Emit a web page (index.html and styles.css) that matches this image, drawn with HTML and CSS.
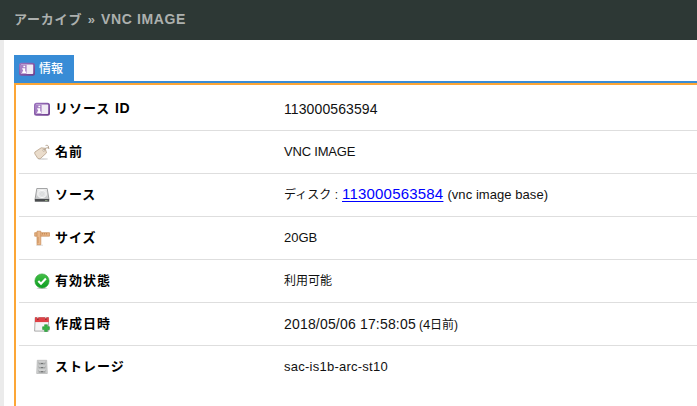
FILE: index.html
```
<!DOCTYPE html>
<html lang="ja">
<head>
<meta charset="utf-8">
<title>アーカイブ » VNC IMAGE</title>
<link rel="stylesheet" href="styles.css">
</head>
<body>
<svg class="defs" aria-hidden="true">
  <defs>
    <linearGradient id="purple" x2="1" y2="1"><stop stop-color="#9a70bd"/><stop offset="1" stop-color="#70408f"/></linearGradient>
    <linearGradient id="silver" x2="0" y2="1"><stop stop-color="#f1f1f1"/><stop offset="1" stop-color="#bfc0c1"/></linearGradient>
    <linearGradient id="green" x2="0" y2="1"><stop stop-color="#45bf47"/><stop offset="1" stop-color="#0b9d20"/></linearGradient>
    <symbol id="info" viewBox="0 0 16 16">
      <rect x=".9" y="2.6" width="14.2" height="11.2" rx="1.6" fill="#f1ebf5" stroke="url(#purple)" stroke-width="1.8"/>
      <rect x="2" y="3.8" width="5.6" height="8.8" fill="#a67fc4"/>
      <path d="M4.4 4.8h1.8v1.5H4.4zM3.2 7.2h3v3.4h1v1.3H3.2v-1.3h.9V8.5h-.9z" fill="#fff"/>
    </symbol>
  </defs>
</svg>
<header class="header"><h1>アーカイブ <span class="raquo">»</span> <span class="title-name">VNC IMAGE</span></h1></header>
<main class="main">
  <nav class="tabs"><div class="tab"><svg class="icon"><use href="#info"/></svg><span>情報</span></div></nav>
  <dl class="panel">
    <div class="row">
      <dt><svg class="icon"><use href="#info"/></svg><span>リソース <span class="id">ID</span></span></dt>
      <dd><span class="number">113000563594</span></dd>
    </div>
    <div class="row">
      <dt><svg class="icon" viewBox="0 0 16 16"><ellipse cx="9" cy="15" rx="5" ry=".9" fill="#ddd"/><path d="M.8 8.1 7.2 3.8l4 .5 1.3 4.6-6.4 5.9-2.3-.4L.8 9.8z" fill="#eadccb" stroke="#bda994" stroke-width=".9"/><circle cx="9.8" cy="6.3" r="1" fill="#fff" stroke="#a89580" stroke-width=".6"/><path d="M10 6.2c1-3.3 4.2-1.4 4.4-3.4.1-1.4-1.5-1.8-2.8-1.2M14.4 3l.5 2" fill="none" stroke="#b29f8a"/></svg><span>名前</span></dt>
      <dd><span class="upper">VNC IMAGE</span></dd>
    </div>
    <div class="row">
      <dt><svg class="icon" viewBox="0 0 16 16"><path d="M2.8 1.5h10.4l1.8 11H1z" fill="url(#silver)" stroke="#8e8f90" stroke-width=".8"/><ellipse cx="8" cy="7" rx="4.2" ry="3.5" fill="#e2e3e4" stroke="#fafafa"/><circle cx="8" cy="7" r="1.1" fill="#fff" stroke="#b9bbbd" stroke-width=".5"/><path d="M.8 12h14.4v2.7H.8z" fill="#4a4c4e"/><path d="M11 13h2.5v.8H11z" fill="#9eb58c"/></svg><span>ソース</span></dt>
      <dd><span class="disk">ディスク<span class="colon">:</span></span><a href="#">113000563584</a><span class="note">(vnc image base)</span></dd>
    </div>
    <div class="row">
      <dt><svg class="icon" viewBox="0 0 16 16"><path d="M2 15.2h7" stroke="#ddd"/><path d="M.7 2.7h14.8v3.5H.7z" fill="#e5b181" stroke="#c98d58" stroke-width=".7"/><path d="M3 1.2h3.8v13.5H3z" fill="#e9b789" stroke="#c88c57" stroke-width=".7"/><path d="M8.5 3v1.5m2-1.5v1.5m2-1.5v1.5M3.3 8H5m-1.7 2H5m-1.7 2H5" stroke="#b7773f" stroke-width=".6"/></svg><span>サイズ</span></dt>
      <dd><span class="size">20GB</span></dd>
    </div>
    <div class="row">
      <dt><svg class="icon" viewBox="0 0 16 16"><ellipse cx="8" cy="15.2" rx="5.5" ry=".8" fill="#ccc"/><circle cx="8" cy="8" r="7.1" fill="url(#green)" stroke="#259d31" stroke-width=".6"/><path d="m4.3 8 2.7 2.7 4.9-5.1" fill="none" stroke="#fff" stroke-width="2.1"/></svg><span>有効状態</span></dt>
      <dd><span>利用可能</span></dd>
    </div>
    <div class="row">
      <dt><svg class="icon" viewBox="0 0 16 16"><path d="M1.2 1.5h13.2l.4 13.6H.6z" fill="#f5f5f5" stroke="#999" stroke-width=".8"/><path d="M1 1.3h13.8v4.8H1z" fill="#df4146"/><path d="M3 3h1.7m6.3 0h1.7" stroke="#8e2529" stroke-width="1.6"/><path d="M3.8.4v2m8-2v2" stroke="#e9e9e9"/><path d="M10.6 8.7h2.8v2h2v2.8h-2v2h-2.8v-2h-2v-2.8h2z" fill="#38b344" stroke="#16862a" stroke-width=".5"/></svg><span>作成日時</span></dt>
      <dd><span class="date">2018/05/06 17:58:05</span><span class="ago">(<span class="four">4</span>日前)</span></dd>
    </div>
    <div class="row">
      <dt><svg class="icon" viewBox="0 0 16 16"><path d="M3.3 1.3h9.4l.6 13.2H2.7z" fill="#cfd0d0" stroke="#b3b4b4" stroke-width=".7"/><path d="M4.5 2.5h7v3h-7zm0 4.1h7v3h-7zm0 4.1h7v3h-7z" fill="#a2a4a4"/><path d="M5 3h6m-6 4.1h6m-6 4.1h6" stroke="#e6e6e6"/><path d="M7 4.5h2M7 8.6h2m-2 4.1h2" stroke="#707272"/></svg><span>ストレージ</span></dt>
      <dd><span class="storage">sac-is1b-arc-st10</span></dd>
    </div>
  </dl>
</main>
</body>
</html>
```
FILE: styles.css
```
* { box-sizing: border-box; }
html { height: 100%; overflow: hidden; }
body {
  display: flex;
  flex-direction: column;
  height: 100%;
  margin: 0;
  background: #fff;
  color: #111;
  font: 12px/18px "Liberation Sans", "Noto Sans CJK JP", sans-serif;
}
.defs { position: absolute; width: 0; height: 0; }
.header {
  flex: 0 0 40px;
  padding: 0 14px;
  background: #2d3835;
}
h1 {
  margin: 0;
  color: #acb0ae;
  font-size: 13px;
  font-weight: 700;
  line-height: 38px;
  letter-spacing: .8px;
  white-space: nowrap;
}
.raquo { margin: 0 1px; }
.title-name { font-size: 14px; letter-spacing: .6px; }
.main {
  flex: 1;
  display: flex;
  flex-direction: column;
  padding: 15px 0 0 10px;
  border-left: 4px solid #ebebeb;
  min-height: 0;
}
.tabs { flex: none; display: flex; border-bottom: 2px solid #388cd6; }
.tab {
  display: flex;
  align-items: center;
  width: 60px;
  height: 26px;
  padding: 2px 0 0 5px;
  gap: 4px;
  background: #388cd6;
  color: #fff;
  font-weight: 500;
}
.icon { flex: none; width: 16px; height: 16px; }
.panel {
  flex: 1;
  margin: 0;
  padding: 3px 0 0 3px;
  border: solid #fca636;
  border-width: 2px 0 0 2px;
}
.row { display: flex; align-items: center; height: 43px; border-bottom: 1px solid #dedede; }
.row:last-child { border-bottom: 0; height: 42px; }
dt {
  display: flex;
  align-items: center;
  gap: 5px;
  width: 250px;
  padding-left: 15px;
  color: #000;
  font-size: 13px;
  font-weight: 700;
  letter-spacing: 1px;
}
dt > span { margin-top: -1px; }
.id { font-size: 14px; letter-spacing: .6px; }
dd { display: flex; align-items: baseline; margin: 0 0 0 15px; white-space: nowrap; }
.number { font-size: 14px; letter-spacing: .1px; }
.upper { font-size: 13px; letter-spacing: -.2px; }
.colon { margin: 0 4px 0 3.5px; }
a { margin-top: -1px; color: #00f; font-size: 15px; letter-spacing: .2px; text-underline-offset: 2px; }
.note { margin-left: 4px; font-size: 13px; letter-spacing: .06px; }
.size { font-size: 13px; }
.date { font-size: 14px; letter-spacing: .18px; }
.storage { font-size: 13px; letter-spacing: .25px; }
.ago { margin-left: 3px; font-size: 12px; }
.four { font-size: 13px; }
```
